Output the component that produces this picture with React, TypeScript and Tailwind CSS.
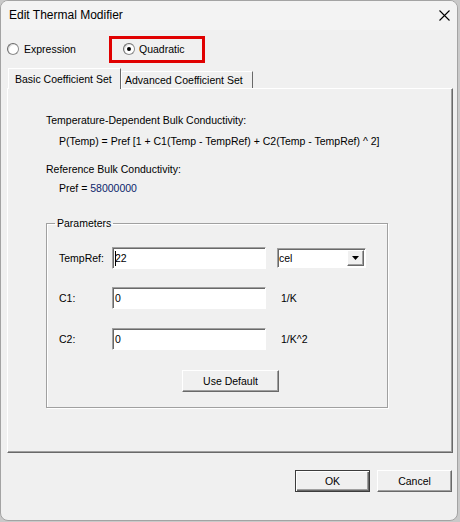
import React from 'react'

const raised =
  'border border-t-white border-l-white border-r-[#696969] border-b-[#696969] shadow-[inset_-1px_-1px_0_#a0a0a0] bg-[#f0f0f0]'
const sunken =
  'border border-t-[#a0a0a0] border-l-[#a0a0a0] border-r-white border-b-white shadow-[inset_1px_1px_0_#696969] bg-white'

function Radio({ checked }: { checked?: boolean }) {
  return (
    <span className="flex h-[12px] w-[12px] shrink-0 items-center justify-center rounded-full border border-[#8c8c8c] border-t-[#6a6a6a] border-l-[#6a6a6a] bg-white shadow-[inset_1px_1px_0_#dcdcdc]">
      {checked && <span className="h-[4px] w-[4px] rounded-full bg-black" />}
    </span>
  )
}

function TextBox({ value, caret }: { value: string; caret?: boolean }) {
  return (
    <div className={`flex h-[22px] w-[154px] items-center pl-[2px] ${sunken}`}>
      {caret && <span className="-mr-px h-[15px] w-px bg-black" />}
      <span>{value}</span>
    </div>
  )
}

export default function App() {
  return (
    <div className="h-[522px] w-[460px] bg-[#c9c9c9]">
      <div className="flex h-[521px] w-[458px] flex-col overflow-hidden rounded-[8px] border border-[#a3a3a3] bg-[#f0f0f0] font-['Liberation_Sans',Arial,sans-serif] text-[10.5px] leading-[13px] text-black">
        {/* Title bar */}
        <div className="flex h-[29px] shrink-0 items-center justify-between bg-[#f3f3f3] pl-[8px] pr-[7px]">
          <span className="text-[12px]">Edit Thermal Modifier</span>
          <svg width="11" height="11" viewBox="0 0 11 11" className="text-black">
            <path d="M0.5 0.5 L10.5 10.5 M10.5 0.5 L0.5 10.5" stroke="currentColor" strokeWidth="1.1" />
          </svg>
        </div>

        {/* Mode radios */}
        <div className="flex h-[38px] shrink-0 items-center pl-[6px]">
          <div className="flex w-[102px] items-center gap-[5px]">
            <Radio />
            <span>Expression</span>
          </div>
          <div className="flex h-[27px] w-[96px] items-center gap-[4px] border-[3px] border-[#e00000] pl-[11px]">
            <Radio checked />
            <span>Quadratic</span>
          </div>
        </div>

        {/* Tabs */}
        <div className="flex h-[20px] shrink-0 items-end pl-[7px]">
          <div className="relative z-10 -mb-px flex h-[21px] w-[113px] items-center border-t border-l border-r border-t-white border-l-white border-r-[#696969] bg-[#f0f0f0] pl-[6px]">
            Basic Coefficient Set
          </div>
          <div className="flex h-[17px] w-[132px] items-center border-t border-l border-r border-t-white border-l-white border-r-[#696969] pl-[3px]">
            Advanced Coefficient Set
          </div>
        </div>

        {/* Tab panel */}
        <div className={`ml-[6px] h-[365px] w-[446px] shrink-0 pl-[38px] pt-[25px] ${raised}`}>
          <p>Temperature-Dependent Bulk Conductivity:</p>
          <p className="mt-[8px] pl-[13px]">P(Temp) = Pref [1 + C1(Temp - TempRef) + C2(Temp - TempRef) ^ 2]</p>
          <p className="mt-[15px]">Reference Bulk Conductivity:</p>
          <p className="mt-[6px] pl-[13px]">
            Pref = <span className="text-[#0c1f6b]">58000000</span>
          </p>

          <fieldset className="mt-[22px] w-[342px] border border-[#a0a0a0] pb-[15px] pl-[12px] shadow-[1px_1px_0_#fff,inset_1px_1px_0_#fff]">
            <legend className="-ml-[4px] px-[2px]">Parameters</legend>

            <div className="mt-[17px] flex items-center">
              <span className="w-[53px]">TempRef:</span>
              <TextBox value="22" caret />
              <div className={`ml-[11px] flex h-[20px] w-[89px] items-center justify-between pl-[1px] pr-px ${sunken}`}>
                <span>cel</span>
                <div className={`flex h-[16px] w-[17px] items-center justify-center ${raised}`}>
                  <svg width="7" height="4" viewBox="0 0 7 4">
                    <path d="M0 0 H7 L3.5 4 Z" fill="#000" />
                  </svg>
                </div>
              </div>
            </div>

            <div className="mt-[18px] flex items-center">
              <span className="w-[53px]">C1:</span>
              <TextBox value="0" />
              <span className="ml-[15px]">1/K</span>
            </div>

            <div className="mt-[19px] flex items-center">
              <span className="w-[53px]">C2:</span>
              <TextBox value="0" />
              <span className="ml-[15px]">1/K^2</span>
            </div>

            <div className="mt-[20px] pl-[123px]">
              <button className={`flex h-[22px] w-[97px] items-center justify-center ${raised}`}>Use Default</button>
            </div>
          </fieldset>
        </div>

        {/* Dialog buttons */}
        <div className="mt-[17px] flex justify-end gap-[7px] pr-[5px]">
          <button className="flex h-[22px] w-[75px] items-center justify-center border border-[#3c3c3c] bg-[#f0f0f0] shadow-[inset_1px_1px_0_#fff,inset_-1px_-1px_0_#696969,inset_-2px_-2px_0_#a0a0a0]">
            OK
          </button>
          <button className={`flex h-[22px] w-[75px] items-center justify-center ${raised}`}>Cancel</button>
        </div>
      </div>
    </div>
  )
}
